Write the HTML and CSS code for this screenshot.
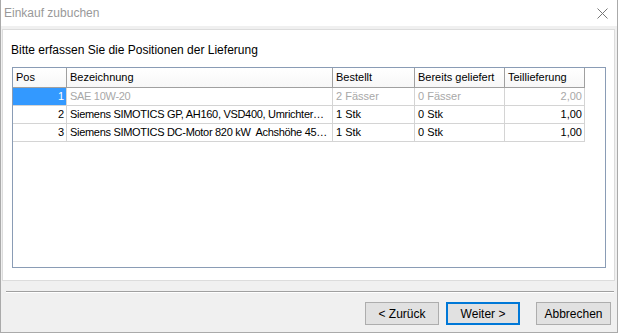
FILE: index.html
```html
<!DOCTYPE html>
<html lang="de">
<head>
    <meta charset="UTF-8">
    <title>Einkauf zubuchen</title>
    <link rel="stylesheet" href="styles.css">
</head>
<body>

<div class="window">
    <header class="titlebar">
        <span class="title">Einkauf zubuchen</span>
        <svg class="close" width="11" height="11" viewBox="0 0 11 11">
            <path d="M0.5 0.5 L10.5 10.5 M10.5 0.5 L0.5 10.5" stroke="#777" stroke-width="1" fill="none"/>
        </svg>
    </header>

    <div class="panel">
        <p class="label">Bitte erfassen Sie die Positionen der Lieferung</p>
        <div class="grid">
            <div class="row head">
                <div class="cell">Pos</div>
                <div class="cell">Bezeichnung</div>
                <div class="cell">Bestellt</div>
                <div class="cell">Bereits geliefert</div>
                <div class="cell">Teillieferung</div>
            </div>
            <div class="row disabled">
                <div class="cell num selected">1</div>
                <div class="cell desc">SAE 10W-20</div>
                <div class="cell">2 Fässer</div>
                <div class="cell">0 Fässer</div>
                <div class="cell num">2,00</div>
            </div>
            <div class="row">
                <div class="cell num">2</div>
                <div class="cell desc">Siemens SIMOTICS GP, AH160, VSD400, Umrichter…</div>
                <div class="cell">1 Stk</div>
                <div class="cell">0 Stk</div>
                <div class="cell num">1,00</div>
            </div>
            <div class="row">
                <div class="cell num">3</div>
                <div class="cell desc">Siemens SIMOTICS DC-Motor 820 kW&nbsp; Achshöhe 45…</div>
                <div class="cell">1 Stk</div>
                <div class="cell">0 Stk</div>
                <div class="cell num">1,00</div>
            </div>
        </div>
    </div>

    <div class="separator"></div>

    <footer class="buttons">
        <button class="btn">&lt; Zurück</button>
        <button class="btn default">Weiter &gt;</button>
        <button class="btn cancel">Abbrechen</button>
    </footer>
</div>

</body>
</html>
```

FILE: styles.css
```css
* {
    box-sizing: border-box;
}
body {
    margin: 0;
    background: #f0f0f0;
    font-family: "Liberation Sans", Arial, sans-serif;
    font-size: 12px;
    color: #000;
}
.window {
    width: 618px;
    height: 333px;
    border: 1px solid #aaaaaa;
    border-top: none;
    background: #f0f0f0;
}
.titlebar {
    display: flex;
    align-items: center;
    justify-content: space-between;
    height: 26px;
    padding: 0 9px 0 3px;
    background: #fff;
}
.title {
    color: #999;
    font-size: 12px;
}
.close {
    display: block;
}
.panel {
    height: 252px;
    margin: 3px 2px 0 1px;
    padding: 12px 8px 0 9px;
    background: #fff;
    border: 1px solid #dcdcdc;
}
.label {
    margin: 0 0 9px;
    line-height: 16px;
    margin-left: -1px;
}
.grid {
    width: 594px;
    height: 201px;
    border: 1px solid #8a9cb5;
    background: #fff;
    font-size: 11px;
}
.row {
    display: grid;
    grid-template-columns: 54px 266px 82px 90px 80px;
    width: 572px;
    height: 18px;
}
.cell {
    padding: 0 2px 0 3px;
    line-height: 17px;
    border-right: 1px solid #d4d4d4;
    border-bottom: 1px solid #d4d4d4;
    white-space: nowrap;
    overflow: hidden;
}
.desc {
    padding-right: 0;
    letter-spacing: -0.3px;
}
.head {
    height: 20px;
}
.head .cell {
    line-height: 19px;
    padding-left: 3px;
    background: linear-gradient(#ffffff, #f7f7f7);
    border-right-color: #a0a0a0;
    border-bottom-color: #a0a0a0;
}
.num {
    text-align: right;
    padding-right: 2px;
}
.disabled .cell {
    color: #a8a8a8;
}
.disabled .cell.selected {
    background: #3399ff;
    color: #fff;
}
.separator {
    margin: 10px 3px 0 5px;
    border-top: 1px solid #a0a0a0;
    border-bottom: 1px solid #fff;
}
.buttons {
    display: flex;
    justify-content: flex-end;
    gap: 7px;
    padding: 9px 6px 0 0;
}
.btn {
    width: 74px;
    height: 23px;
    padding: 0;
    font-family: "Liberation Sans", Arial, sans-serif;
    font-size: 12px;
    color: #000;
    background: #e1e1e1;
    border: 1px solid #adadad;
}
.btn.default {
    border: 2px solid #0078d7;
}
.btn.cancel {
    width: 75px;
    margin-left: 9px;
}
```
